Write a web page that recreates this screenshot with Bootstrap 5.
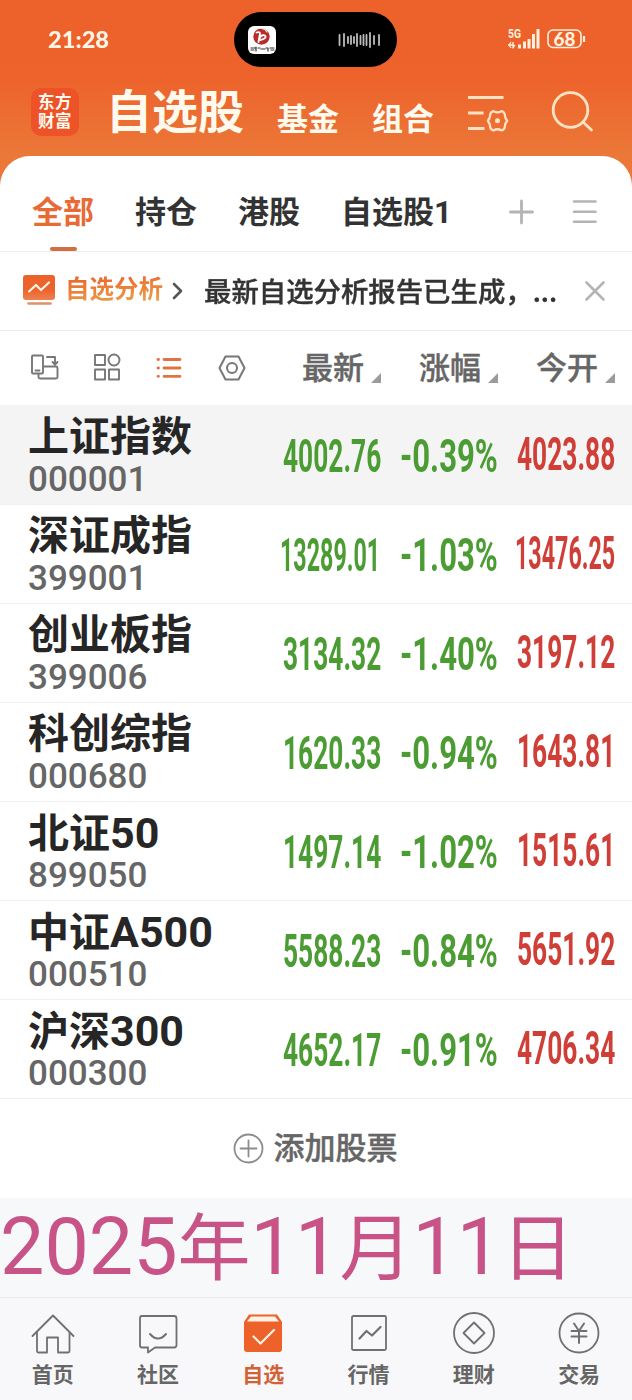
<!DOCTYPE html>
<html lang="zh-CN">
<head>
<meta charset="utf-8">
<meta name="viewport" content="width=device-width, initial-scale=1">
<title>自选股</title>
<link rel="stylesheet" href="https://cdn.jsdelivr.net/npm/bootstrap@5.3.0/dist/css/bootstrap.min.css">
<style>
body{font-family:Roboto,"Noto Sans CJK SC",sans-serif;width:632px;height:1400px;overflow:hidden;background:#fff;color:#333;line-height:1}
svg{display:block;flex:none;fill:none;stroke-linecap:round;stroke-linejoin:round}
.fit{display:block;flex:none;white-space:nowrap}
.fit>span{display:inline-block;transform-origin:0 50%}
.app-head{height:186px;background:linear-gradient(#ed612b 0,#ed632b 78px,#eb7838 156px)}
.status{height:78px;color:#fff6e8}
.clock{font:900 22.5px/28px Lato,"Noto Sans",sans-serif;padding:2px 0 0 48px;width:234px}
.island{width:163px;height:55px;border-radius:28px;background:#000;margin-top:1px;padding:0 16px 0 14px}
.appicon{width:28px;height:28px;border-radius:6px;background:#fff}
.titles{height:78px;color:#fffaee;font-weight:500}
.brand{width:48px;height:48px;border-radius:10px;background:#ee5228;font:700 16.5px/19px "Liberation Sans","Noto Sans CJK SC",sans-serif;letter-spacing:.5px;margin:-11px 27px 0 31px}
.t-main{font-size:46px;font-weight:700;line-height:50px;margin-top:-11px}
.t-sub{font-size:31px;line-height:34px;font-weight:700;margin-top:5px}
.panel{margin-top:-30px;border-radius:30px 30px 0 0;background:#fff}
.tabs{height:96px;border-bottom:1px solid #ececec;font-size:31px;font-weight:700;padding-left:32px}
.tabs .tab{height:95px;margin-right:41px;padding-top:9px;position:relative;line-height:95px}
.tabs .on{color:#e86a35}
.tabs .on::after{content:"";position:absolute;left:18px;bottom:0;width:27px;height:4px;border-radius:2px;background:#d16f43}
.notice{height:79px;border-bottom:1px solid #ececec;font-size:27px;font-weight:500;padding-left:23px}
.notice .fit,.cols,.addrow{-webkit-text-stroke:.4px currentColor}
.grad{font-size:24.5px;font-weight:700;line-height:34px;background:linear-gradient(175deg,#ec6b30 20%,#e9a24c 85%);-webkit-background-clip:text;background-clip:text;color:transparent}
.cols{height:74px;padding-left:28px;color:#666;font-size:31px;font-weight:500}
.cols .tri{width:10px;height:10px;background:#9b9b9b;clip-path:polygon(100% 0,100% 100%,0 100%);margin:20px 0 0 7px}
.quote{height:99px;border-bottom:1px solid #f0f0f0;padding:0 17px 0 28px}
.quote.hot{background:#f4f4f4;height:100px;padding-top:1px}
.qname{font-size:41px;line-height:50px;height:50px;font-weight:700;color:#262626;margin-top:6px;white-space:nowrap}
.qname b{font-size:43px;font-weight:700}
.code{font-size:35px;line-height:36px;font-weight:500;color:#666}
.num{font-size:47px;line-height:50px;font-weight:700;margin-top:1px}
.num+.num{margin-left:19px}
.five .num+.num{margin-left:20px}
.five .num+.num.up{margin-left:17px}
.dn{color:#4b9c33}.up{color:#cf3f38;margin-top:-2px}
.addrow{height:99px;font-size:31px;font-weight:500;color:#666}
.date{height:99px;background:#f6f8fa;color:#c85387;font-size:79px;line-height:99px;white-space:nowrap}
.date i{font-style:normal;font-size:73px}
.foot{height:103px;background:#f8f8fa;border-top:1px solid #e9e9eb;color:#666;font-size:21px;font-weight:700;padding-top:12px}
.foot a{width:105.3px;color:inherit;text-decoration:none}
.foot svg{stroke:#707070;stroke-width:1.8}
.foot .lbl{line-height:26px;margin-top:6px}
.foot .now{color:#d26235}
</style>
</head>
<body>
<header class="app-head">
  <div class="status d-flex align-items-center">
    <div class="clock"><div class="fit" data-w="61"><span>21:28</span></div></div>
    <div class="island d-flex align-items-center justify-content-between">
      <div class="appicon"><svg width="28" height="28"><circle cx="13.500" cy="10.500" r="8.200" fill="#b72d2c"/><path d="M7 4c4-3 10-2 12 2" stroke="#eee" stroke-width="1.200"/><path d="M8.500 6.500c4-1 4 1 3 3.500l-1 6M12 12c0-3 6-4 5.500-1 0 2-3 2-5 3" stroke="#fff" stroke-width="1.800"/><path d="M3 22h4M3 24h3M8 21v4M10 22h2M13 23h4M18 22h2v3M22 22h4M23 24h3" stroke="#333" stroke-width="1.200"/></svg></div>
      <svg width="43" height="18" stroke="#bbb" stroke-width="1.800"><path d="M1.500 4v10M6 3v12M10 6v6M13 5v8M16 6v6M19 3v12M22.500 5v8M25.500 4v10M28.500 4v10M32 2v14M36 5v8M41 4v10"/></svg>
    </div>
    <svg width="80" height="22" class="ms-auto" style="margin-right:44px"><g font-family="Roboto" font-weight="700" fill="#fff0dd"><text x="0" y="10" font-size="12" textLength="13" lengthAdjust="spacingAndGlyphs">5G</text><text x="45.500" y="17.500" font-family="Lato" font-weight="900" font-size="18" textLength="22" lengthAdjust="spacingAndGlyphs">68</text></g><g stroke="#fff0dd" stroke-width="3" stroke-linecap="butt"><path d="M11.500 20.500v-4M16.500 20.500v-7M21 20.500V11M25.500 20.500V6M30 20.500V1"/><path d="M0 17h6M3 14l-2 3 2 3M5 14v6l2-3" stroke-width="1.300"/><rect x="40" y="2" width="33" height="17.500" rx="5" stroke-width="1.600"/><path d="M76 8v6" stroke-width="2.200"/></g></svg>
  </div>
  <div class="titles d-flex align-items-center">
    <div class="brand d-flex flex-column align-items-center justify-content-center"><span>东方</span><span>财富</span></div>
    <div class="t-main">自选股</div>
    <div class="t-sub" style="margin-left:33px">基金</div>
    <div class="t-sub" style="margin-left:33px">组合</div>
    <svg width="44" height="40" style="margin:-9px 0 0 32px" stroke="#ffe2c4" stroke-width="2.800"><path d="M2 4.500h35.500M2 20h15.500M2 35.500h16.500" stroke-linecap="butt"/><path d="M27.500 18.200q4 2.300 8 0 3.500 1 3.500 5 0 1.500 2.200 4.600-2.200 3-2.200 4.600 0 4-3.500 5-4-2.300-8 0-3.500-1-3.500-5 0-1.500-2.200-4.600 2.200-3 2.200-4.600 0-4 3.500-5z" stroke-width="2.300"/><circle cx="31.500" cy="27.800" r="2.500" fill="#ffe2c4" stroke="none"/></svg>
    <svg width="44" height="44" style="margin:-10px 0 0 41px" stroke="#ffe2c4" stroke-width="2.800"><circle cx="19.500" cy="20" r="17.300"/><path d="M32 32l8.500 8"/></svg>
  </div>
</header>
<main class="panel">
  <nav class="tabs d-flex">
    <div class="tab on">全部</div><div class="tab">持仓</div><div class="tab">港股</div><div class="tab">自选股1</div>
    <svg width="26" height="26" style="margin:43px 0 0 16px" stroke="#b4b4b4" stroke-width="2.800"><path d="M1.500 13h22M12.500 2v22"/></svg>
    <svg width="26" height="26" style="margin:43px 0 0 37px" stroke="#b4b4b4" stroke-width="2.600"><path d="M2 2.500h21.500M2 12.700h21.500M2 22.700h21.500"/></svg>
  </nav>
  <section class="notice d-flex align-items-center">
    <svg width="33" height="32" style="margin-top:-3px"><defs><linearGradient id="g" x2="0" y2="1"><stop stop-color="#ec622b"/><stop offset=".6" stop-color="#ec642d"/><stop offset="1" stop-color="#ef8150"/></linearGradient></defs><rect y="1" width="32" height="25" rx="3" fill="url(#g)"/><path d="M6 17.500l7-6.500 5 5 8-7.500" stroke="#fff4e4" stroke-width="2.200"/><path d="M5.500 29.500h22" stroke="#e29069" stroke-width="2.600"/></svg>
    <div class="grad" style="margin:-2px 0 0 9px">自选分析</div>
    <svg width="14" height="20" style="margin:0 0 0 8px" stroke="#555" stroke-width="2.600"><path d="M3 3l7 7-7 7"/></svg>
    <div class="fit" data-w="353" style="margin:-2px 0 0 19px;font-family:'Noto Sans CJK SC',sans-serif"><span>最新自选分析报告已生成，...</span></div>
    <svg width="24" height="24" style="margin-left:26px" stroke="#b4b4b4" stroke-width="2.600"><path d="M3.500 3.500l17 17M20.500 3.500l-17 17"/></svg>
  </section>
  <section class="cols d-flex align-items-center">
    <svg width="32" height="30" stroke="#777" stroke-width="1.900"><rect x="4" y="2.500" width="11" height="18" rx="1"/><path d="M7.500 17.500h4M19 4h8v7M24.500 9l2.500 2.500L29.500 9M16 13.500h12q1.500 0 1.500 1.500v9q0 1.500-1.500 1.500H12q-1.500 0-1.500-1.500v-3"/></svg>
    <svg width="30" height="30" style="margin-left:32px" stroke="#777" stroke-width="1.900"><rect x="3" y="2" width="10" height="10"/><circle cx="22" cy="7" r="5.500"/><rect x="3" y="16.500" width="10" height="10"/><rect x="17" y="16.500" width="10" height="10"/></svg>
    <svg width="28" height="26" style="margin-left:32px" stroke="#df7443" stroke-width="2.800"><path d="M4 4.500h.5M4 13h.5M4 21.300h.5M10 4.500h16M10 13h16M10 21.300h16"/></svg>
    <svg width="30" height="30" style="margin-left:35px" stroke="#777" stroke-width="2"><path d="M8.500 3.500h13l6 11.500-6 11.500h-13L2.500 15z"/><circle cx="15" cy="15" r="5"/></svg>
    <span style="margin-left:55px">最新</span><i class="tri"></i>
    <span style="margin-left:38px">涨幅</span><i class="tri"></i>
    <span style="margin-left:38px">今开</span><i class="tri"></i>
  </section>
  <section>
    <div class="quote hot d-flex"><div class="flex-grow-1"><div class="qname">上证指数</div><div class="code">000001</div></div><div class="d-flex align-items-center"><div class="fit num dn" data-w="98"><span>4002.76</span></div><div class="fit num dn" data-w="98"><span>-0.39%</span></div><div class="fit num up" data-w="98"><span>4023.88</span></div></div></div>
    <div class="quote five d-flex"><div class="flex-grow-1"><div class="qname">深证成指</div><div class="code">399001</div></div><div class="d-flex align-items-center"><div class="fit num dn" data-w="100"><span>13289.01</span></div><div class="fit num dn" data-w="98"><span>-1.03%</span></div><div class="fit num up" data-w="100"><span>13476.25</span></div></div></div>
    <div class="quote d-flex"><div class="flex-grow-1"><div class="qname">创业板指</div><div class="code">399006</div></div><div class="d-flex align-items-center"><div class="fit num dn" data-w="98"><span>3134.32</span></div><div class="fit num dn" data-w="98"><span>-1.40%</span></div><div class="fit num up" data-w="98"><span>3197.12</span></div></div></div>
    <div class="quote d-flex"><div class="flex-grow-1"><div class="qname">科创综指</div><div class="code">000680</div></div><div class="d-flex align-items-center"><div class="fit num dn" data-w="98"><span>1620.33</span></div><div class="fit num dn" data-w="98"><span>-0.94%</span></div><div class="fit num up" data-w="98"><span>1643.81</span></div></div></div>
    <div class="quote d-flex"><div class="flex-grow-1"><div class="qname">北证<b>50</b></div><div class="code">899050</div></div><div class="d-flex align-items-center"><div class="fit num dn" data-w="98"><span>1497.14</span></div><div class="fit num dn" data-w="98"><span>-1.02%</span></div><div class="fit num up" data-w="98"><span>1515.61</span></div></div></div>
    <div class="quote d-flex"><div class="flex-grow-1"><div class="qname">中证<b>A500</b></div><div class="code">000510</div></div><div class="d-flex align-items-center"><div class="fit num dn" data-w="98"><span>5588.23</span></div><div class="fit num dn" data-w="98"><span>-0.84%</span></div><div class="fit num up" data-w="98"><span>5651.92</span></div></div></div>
    <div class="quote d-flex"><div class="flex-grow-1"><div class="qname">沪深<b>300</b></div><div class="code">000300</div></div><div class="d-flex align-items-center"><div class="fit num dn" data-w="98"><span>4652.17</span></div><div class="fit num dn" data-w="98"><span>-0.91%</span></div><div class="fit num up" data-w="98"><span>4706.34</span></div></div></div>
  </section>
  <div class="addrow d-flex align-items-center justify-content-center"><svg width="32" height="32" style="margin:0 9px 0 -2px" stroke="#8c8c8c" stroke-width="1.800"><circle cx="15.500" cy="15.500" r="14"/><path d="M7.500 15.500h16M15.500 7.500v16"/></svg>添加股票</div>
</main>
<div class="date">2025<i>年</i>11<i>月</i>11<i>日</i></div>
<footer class="foot d-flex">
  <a class="d-flex flex-column align-items-center"><svg width="46" height="46"><path d="M2.500 26L23 5.500 43.500 26M7 22v19q0 1.500 1.500 1.500H17V27.500h11v15h10q1.500 0 1.500-1.500V22"/></svg><span class="lbl">首页</span></a>
  <a class="d-flex flex-column align-items-center"><svg width="46" height="46"><path d="M6 6h33q2.500 0 2.500 2.500V35q0 2.500-2.500 2.500H20L13 42.500v-5H7q-2 0-2-2V8q0-2 2-2"/><path d="M15 24q8 9 16 0" stroke-width="2"/></svg><span class="lbl">社区</span></a>
  <a class="now d-flex flex-column align-items-center"><svg width="46" height="46"><path d="M4 12l5-7.500h28l5 7.500v27q0 3-3 3H7q-3 0-3-3z" fill="#ed612b" stroke="none"/><path d="M11 6.500h24l4 5H7z" fill="#fff3e5" stroke="none"/><path d="M13.500 26.500l7 7L34 20" stroke="#fff3e5" stroke-width="2.200"/></svg><span class="lbl">自选</span></a>
  <a class="d-flex flex-column align-items-center"><svg width="46" height="46"><rect x="6" y="6" width="34" height="34" rx="1.500"/><path d="M13.500 28.500l7-7.500 5.500 4.500 8.500-8.500" stroke-width="2.200"/></svg><span class="lbl">行情</span></a>
  <a class="d-flex flex-column align-items-center"><svg width="46" height="46"><circle cx="23" cy="23" r="20"/><path d="M23 12.500L33.500 23 23 33.500 12.500 23z"/></svg><span class="lbl">理财</span></a>
  <a class="d-flex flex-column align-items-center"><svg width="46" height="46"><circle cx="23" cy="23" r="19.500"/><path d="M18 13.500l5 7.500 5-7.500M15.500 21h15M15.500 26.500h15M23 21v12" stroke-width="2"/></svg><span class="lbl">交易</span></a>
</footer>
<script src="https://cdn.jsdelivr.net/npm/bootstrap@5.3.0/dist/js/bootstrap.bundle.min.js"></script>
<script>
// Squeeze each figure horizontally to the width of its column
document.querySelectorAll('.fit').forEach(function(el){
  var s=el.firstElementChild,w=+el.dataset.w,n=s.offsetWidth;
  s.style.transform='scaleX('+w/n+')';
  s.style.marginRight=(w-n)+'px';
  el.style.width=w+'px';
});
</script>
</body>
</html>
